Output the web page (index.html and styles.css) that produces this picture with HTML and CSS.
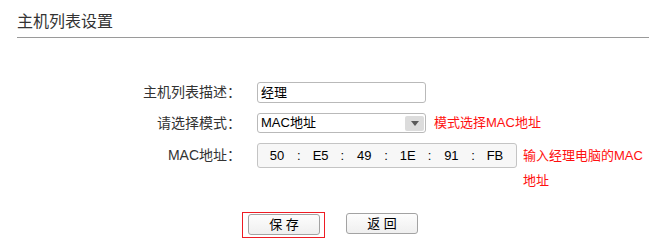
FILE: index.html
```html
<!DOCTYPE html>
<html lang="zh-CN">
<head>
<meta charset="utf-8">
<title>主机列表设置</title>
<link rel="stylesheet" href="styles.css">
</head>
<body>
<div class="header"><span class="title">主机列表设置</span></div>
<div class="form">
  <div class="label h21">主机列表描述：</div>
  <div class="field"><div class="textbox">经理</div></div>

  <div class="label h20">请选择模式：</div>
  <div class="field">
    <div class="select">
      <span class="select-value">MAC地址</span>
      <span class="select-btn"><span class="tri"></span></span>
    </div>
    <div class="note h20 note-select">模式选择MAC地址</div>
  </div>

  <div class="label h25">MAC地址：</div>
  <div class="field">
    <div class="macbox">
      <span class="oct">50</span><span class="sep">:</span>
      <span class="oct">E5</span><span class="sep">:</span>
      <span class="oct">49</span><span class="sep">:</span>
      <span class="oct">1E</span><span class="sep">:</span>
      <span class="oct">91</span><span class="sep">:</span>
      <span class="oct">FB</span>
    </div>
    <div class="note h25 note-mac">输入经理电脑的MAC地址</div>
  </div>
</div>
<div class="actions">
  <div class="highlight"><button class="btn" type="button">保 存</button></div>
  <button class="btn" type="button">返 回</button>
</div>
</body>
</html>
```
FILE: styles.css
```css
html, body {
  margin: 0;
  padding: 0;
  background: #ffffff;
}
body {
  font-family: "Liberation Sans", "Noto Sans CJK SC", sans-serif;
  color: #333333;
  width: 658px;
}
.header {
  margin: 0 9px 0 17px;
  padding-top: 12px;
  padding-bottom: 5px;
  border-bottom: 1px solid #9a9a9a;
  height: 20px;
}
.title {
  font-size: 16px;
  line-height: 20px;
  color: #333333;
  display: block;
}
.form {
  display: grid;
  grid-template-columns: 241px 1fr;
  row-gap: 10px;
  margin-top: 44px;
  align-items: start;
}
.label {
  font-size: 14px;
  text-align: right;
  color: #333333;
  white-space: nowrap;
}
.h20 { line-height: 20px; }
.h21 { line-height: 21px; }
.h25 { line-height: 25px; }
.field {
  padding-left: 16px;
  display: flex;
  align-items: flex-start;
}
.note {
  font-size: 13px;
  color: #ff1010;
}
.note-select {
  margin-left: 8px;
}
.note-mac {
  margin-left: 6px;
  width: 124px;
}
.textbox {
  box-sizing: border-box;
  width: 169px;
  height: 21px;
  border: 1px solid #b9b9b9;
  border-radius: 3px;
  padding-left: 3px;
  font-size: 13px;
  line-height: 19px;
  color: #000000;
  background: #ffffff;
}
.select {
  box-sizing: border-box;
  width: 169px;
  height: 20px;
  flex: none;
  border: 1px solid #b9b9b9;
  border-radius: 3px;
  padding-left: 3px;
  display: flex;
  align-items: center;
  justify-content: space-between;
  background: #ffffff;
}
.select-value {
  font-size: 13px;
  line-height: 18px;
  color: #000000;
}
.select-btn {
  width: 19px;
  height: 15px;
  margin-right: 1px;
  background: #dcdcdc;
  border-radius: 2px;
  display: flex;
  align-items: center;
  justify-content: center;
}
.tri {
  width: 0;
  height: 0;
  border-left: 4px solid transparent;
  border-right: 4px solid transparent;
  border-top: 5px solid #5a5a5a;
}
.macbox {
  box-sizing: border-box;
  width: 260px;
  height: 25px;
  flex: none;
  border: 1px solid #c4c4c4;
  border-radius: 3px;
  background: #f7f7f7;
  padding-left: 4px;
  display: flex;
  align-items: center;
  font-size: 13px;
  color: #000000;
}
.oct {
  width: 30px;
  text-align: center;
  line-height: 23px;
}
.sep {
  width: 13.6px;
  text-align: center;
  line-height: 23px;
}
.actions {
  display: flex;
  align-items: flex-start;
  margin-top: 19px;
  margin-left: 242px;
}
.highlight {
  border: 1px solid #ee1c24;
  padding: 1px 4px 2px 5px;
  margin-right: 21px;
  display: flex;
}
.btn {
  box-sizing: border-box;
  width: 72px;
  height: 21px;
  margin: 1px 0 0 0;
  padding: 0;
  border: 1px solid #a3a3a3;
  border-radius: 3px;
  background: linear-gradient(#fdfdfd, #efefef);
  font-family: "Liberation Sans", "Noto Sans CJK SC", sans-serif;
  font-size: 13px;
  line-height: 19px;
  color: #000000;
}
.highlight .btn {
  margin-top: 0;
}
```
